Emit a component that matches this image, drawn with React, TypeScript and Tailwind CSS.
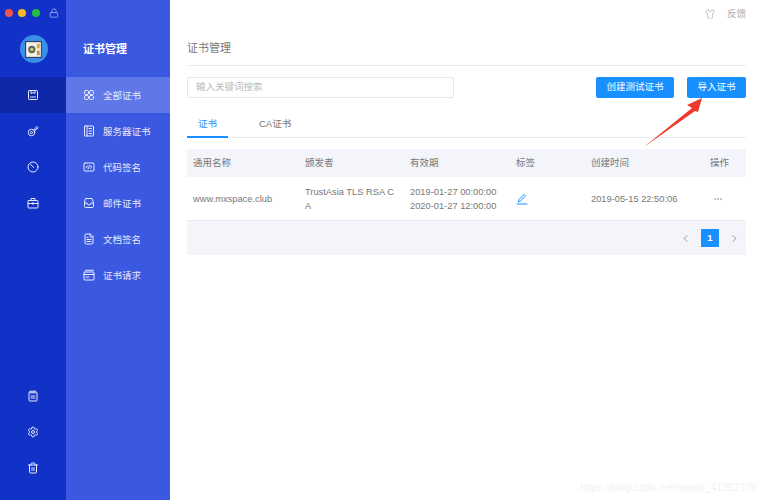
import { ChevronLeft, ChevronRight, Shirt, Lock, Settings, Trash2, FileText, MoreHorizontal } from "lucide-react"
import type { ReactNode } from "react"

const font = { fontFamily: '"Liberation Sans", "Noto Sans CJK SC", sans-serif' }

function Ico({ children, size = 12 }: { children: ReactNode; size?: number }) {
  return (
    <svg width={size} height={size} viewBox="0 0 24 24" fill="none" stroke="currentColor" strokeWidth="2" strokeLinecap="round" strokeLinejoin="round">
      {children}
    </svg>
  )
}

// left rail icons
const SaveIcon = () => (
  <Ico>
    <rect x="3" y="3" width="18" height="18" rx="1.5" />
    <path d="M8 3v6l4-2 4 2V3" />
    <path d="M7 16h10" />
  </Ico>
)
const KeyIcon = () => (
  <Ico>
    <circle cx="9" cy="15" r="6.5" />
    <circle cx="9" cy="15" r="2" />
    <path d="M13 10l7-7 2 2-2 3-2 0-1 3-2 1" />
  </Ico>
)
const ClockIcon = () => (
  <Ico>
    <circle cx="12" cy="12" r="10" />
    <path d="M7 6l6 7" />
  </Ico>
)
const CaseIcon = () => (
  <Ico>
    <rect x="2" y="7" width="20" height="15" rx="1.5" />
    <path d="M8 7V3h8v4M2 13h20M12 11v4" />
  </Ico>
)
const NoteIcon = () => (
  <Ico>
    <rect x="4" y="4" width="16" height="18" rx="1.5" />
    <path d="M8 1.5v5M12 1.5v5M16 1.5v5M8 12h8M8 16h8" />
  </Ico>
)

// second column icons
const GridIcon = () => (
  <Ico>
    <rect x="3" y="3" width="8" height="8" rx="2.5" />
    <rect x="13" y="3" width="8" height="8" rx="2.5" />
    <rect x="3" y="13" width="8" height="8" rx="2.5" />
    <rect x="13" y="13" width="8" height="8" rx="2.5" />
  </Ico>
)
const ServerIcon = () => (
  <Ico>
    <rect x="3" y="2" width="18" height="20" rx="1" />
    <path d="M8 2v20M12 7h5M12 12h5M12 17h5" />
  </Ico>
)
const CodeIcon = () => (
  <Ico>
    <rect x="2" y="4" width="20" height="16" rx="2" />
    <path d="M9 9.5L6.5 12 9 14.5M15 9.5l2.5 2.5-2.5 2.5M13 9l-2 6" />
  </Ico>
)
const InboxIcon = () => (
  <Ico>
    <path d="M6 3h12l3 8v8a2 2 0 0 1-2 2H5a2 2 0 0 1-2-2v-8z" />
    <path d="M3 12h5a4 4 0 0 0 8 0h5" />
  </Ico>
)
const RequestIcon = () => (
  <Ico>
    <path d="M5 2.5h16" />
    <rect x="2" y="6" width="20" height="16" rx="2" />
    <path d="M2 11h20M6 16h6" />
  </Ico>
)

const rail = [
  { icon: <SaveIcon />, active: true },
  { icon: <KeyIcon /> },
  { icon: <ClockIcon /> },
  { icon: <CaseIcon /> },
]

const railBottom = [<NoteIcon key="n" />, <Settings key="s" size={12} strokeWidth={2} />, <Trash2 key="t" size={12} strokeWidth={2} />]

const menu = [
  { label: "全部证书", icon: <GridIcon />, active: true },
  { label: "服务器证书", icon: <ServerIcon /> },
  { label: "代码签名", icon: <CodeIcon /> },
  { label: "邮件证书", icon: <InboxIcon /> },
  { label: "文档签名", icon: <FileText size={12} strokeWidth={2} /> },
  { label: "证书请求", icon: <RequestIcon /> },
]

const columns = "grid grid-cols-[112px_105px_106px_75px_119px_30px] pl-[6px]"

export default function App() {
  return (
    <div className="relative flex h-[500px] w-[767px] overflow-hidden bg-white text-[#777]" style={font}>
      <aside className="flex w-[66px] shrink-0 flex-col bg-[#1231c6] text-[#e6ebff]">
        <div className="flex h-[26px] items-center pl-[5px]">
          <span className="h-[8px] w-[8px] rounded-full bg-[#f0554f]" />
          <span className="ml-[5px] h-[8px] w-[8px] rounded-full bg-[#fdb81f]" />
          <span className="ml-[5.5px] h-[8px] w-[8px] rounded-full bg-[#22c144]" />
          <Lock size={10} strokeWidth={1.8} className="ml-[9px] text-[#aab8f5]" />
        </div>
        <div className="mt-[9px] flex justify-center pl-[1px]">
          <div className="flex h-[28px] w-[28px] items-center justify-center rounded-full bg-[#3a8ee6]">
            <svg width="17" height="17" viewBox="0 0 15 15">
              <rect x="0.5" y="0.5" width="14" height="14" fill="#f3f1e6" stroke="#33406b" strokeWidth="1" />
              <circle cx="6" cy="7.5" r="3.2" fill="#5c6a5a" />
              <circle cx="6" cy="7.5" r="1.5" fill="#d9c66d" />
              <rect x="10.5" y="2.5" width="2.5" height="4" fill="#e2a33c" />
              <rect x="10.5" y="8.5" width="2.5" height="4" fill="#c98f3a" />
            </svg>
          </div>
        </div>
        <nav className="mt-[14px] flex flex-col">
          {rail.map((r, i) => (
            <div key={i} className={`flex h-[36px] items-center justify-center ${r.active ? "bg-[#0f28a8]" : ""}`}>
              {r.icon}
            </div>
          ))}
        </nav>
        <div className="mt-auto mb-[14px] flex flex-col">
          {railBottom.map((icon, i) => (
            <div key={i} className="flex h-[36px] items-center justify-center">
              {icon}
            </div>
          ))}
        </div>
      </aside>

      <aside className="flex w-[104px] shrink-0 flex-col bg-[#3b58e0] text-[#e6ebff]">
        <div className="flex h-[77px] items-center pl-[17px] pt-[21px] text-[11px] font-bold text-white">证书管理</div>
        {menu.map((m) => (
          <div key={m.label} className={`flex h-[36px] items-center pl-[17px] text-[9.5px] ${m.active ? "bg-[#5f78e8]" : ""}`}>
            <span className="mr-[8px] flex w-[12px] justify-center">{m.icon}</span>
            <span className="pt-[2px]">{m.label}</span>
          </div>
        ))}
      </aside>

      <main className="flex min-w-0 flex-1 flex-col pl-[17px] pr-[21px]">
        <div className="flex h-[26px] items-center justify-end gap-[12px] pt-[2px] text-[9.5px] text-[#aaa]">
          <Shirt size={10} strokeWidth={1.5} />
          <span>反馈</span>
        </div>
        <div className="flex h-[40px] items-center border-b border-[#e8ecf2] pt-[6px] text-[11px]">证书管理</div>

        <div className="mt-[11px] flex h-[21px] items-stretch gap-[13px]">
          <div className="mr-auto flex w-[267px] items-center rounded-[2px] border border-[#e6e8ee] pl-[8px] text-[9.5px] text-[#bbb]">输入关键词搜索</div>
          <button className="w-[78px] rounded-[2px] bg-[#1890ff] text-[9.5px] text-white">创建测试证书</button>
          <button className="w-[59px] rounded-[2px] bg-[#1890ff] text-[9.5px] text-white">导入证书</button>
        </div>

        <div className="mt-[15px] flex h-[25px] border-b border-[#e8ecf2] text-[9.5px]">
          <div className="-mb-px w-[41px] border-b-2 border-[#1890ff] pt-[4px] text-center text-[#1890ff]">证书</div>
          <div className="ml-[31px] pt-[4px]">CA证书</div>
        </div>

        <div className={`${columns} mt-[11px] h-[28px] items-center bg-[#f3f5fa] text-[9.5px]`}>
          <span>通用名称</span>
          <span>颁发者</span>
          <span>有效期</span>
          <span>标签</span>
          <span>创建时间</span>
          <span>操作</span>
        </div>
        <div className={`${columns} h-[44px] items-center border-b border-[#e8ecf2] text-[9.3px] leading-[14px]`}>
          <span>www.mxspace.club</span>
          <span className="break-all pr-[12px]">TrustAsia TLS RSA CA</span>
          <span>
            2019-01-27 00:00:00
            <br />
            2020-01-27 12:00:00
          </span>
          <span className="text-[#1890ff]">
            <svg width="12" height="12" viewBox="0 0 24 24" fill="none" stroke="currentColor" strokeWidth="2" strokeLinecap="round" strokeLinejoin="round">
              <path d="M5 17l1-4L16 3l3 3-10 10z" />
              <path d="M2 22h20" />
            </svg>
          </span>
          <span>2019-05-15 22:50:06</span>
          <span className="pl-[3px] text-[#888]">
            <MoreHorizontal size={10} strokeWidth={1.5} />
          </span>
        </div>
        <div className="flex h-[34px] items-center justify-end bg-[#f3f5fa] pr-[6px] text-[#666]">
          <ChevronLeft size={11} strokeWidth={1.5} />
          <span className="mx-[10px] flex h-[18px] w-[18px] items-center justify-center bg-[#1890ff] text-[9.5px] font-bold text-white">1</span>
          <ChevronRight size={11} strokeWidth={1.5} />
        </div>
      </main>

      {/* red annotation arrow on top of the screenshot */}
      <svg className="absolute left-[640px] top-[95px]" width="70" height="56" viewBox="640 95 70 56">
        <polygon points="702,98 687,105 692,108 644,147 695,111 698,112" fill="#ee3a2e" />
      </svg>
      <span className="absolute left-[580px] top-[480px] text-[10.4px] text-[#f2f2f2]">https://blog.csdn.net/weixin_41392105</span>
    </div>
  )
}
